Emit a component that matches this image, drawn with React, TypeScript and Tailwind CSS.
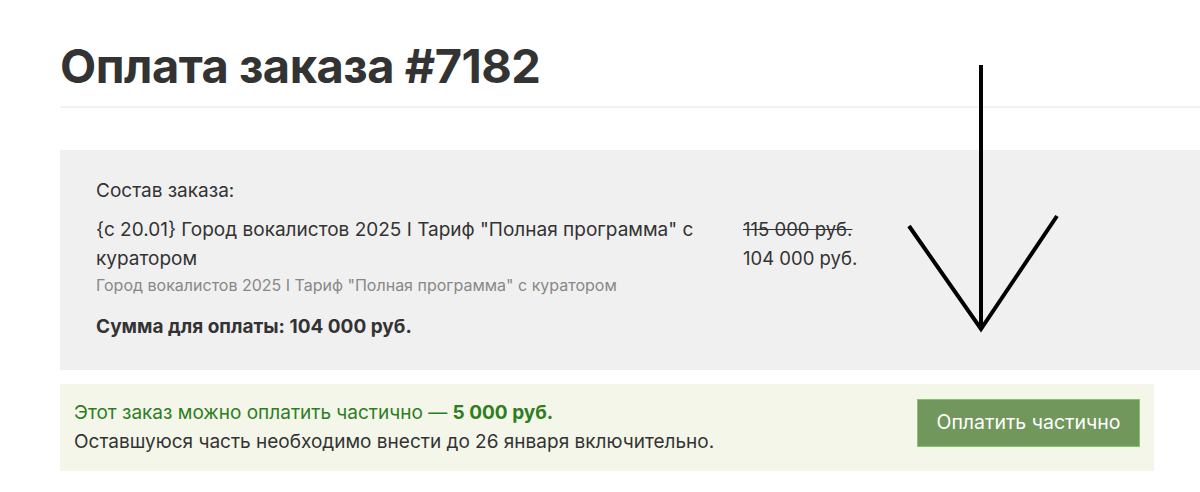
export default function App() {
  return (
    <div
      className="relative min-h-[492px] w-[1200px] overflow-hidden bg-white text-[#333]"
      style={{ fontFamily: 'Inter, "Noto Sans", sans-serif' }}
    >
      <div className="pl-[60px] pt-[38px]">
        <h1 className="text-[47px] font-bold leading-[56px] tracking-[-0.5px] text-[#333]">
          Оплата заказа #7182
        </h1>
        <div className="mt-[12px] h-[2px] bg-[#f2f2f2]" />

        <section className="mt-[42px] h-[220px] bg-[#f0f0f0] pl-[36px] pt-[28px]">
          <p className="text-[19px] leading-[26px] text-[#333]">Состав заказа:</p>
          <div className="mt-[11px] flex">
            <div className="w-[647px]">
              <p className="w-[630px] text-[19px] leading-[29px] text-[#333]">
                {'{с 20.01} Город вокалистов 2025 I Тариф "Полная программа" с куратором'}
              </p>
              <p className="mt-[1px] text-[16px] leading-[22px] text-[#888]">
                Город вокалистов 2025 I Тариф "Полная программа" с куратором
              </p>
            </div>
            <div className="text-[18.5px] leading-[29px] text-[#333]">
              <p className="line-through">115 000 руб.</p>
              <p>104 000 руб.</p>
            </div>
          </div>
          <p className="mt-[18px] text-[19px] font-bold leading-[26px] text-[#333]">
            Сумма для оплаты: 104 000 руб.
          </p>
        </section>

        <section className="mt-[14px] flex h-[87px] w-[1094px] justify-between bg-[#f3f6e9] pl-[14px] pr-[14px]">
          <div className="pt-[14px] text-[19px] leading-[29px]">
            <p className="text-[#2e7d1f]">
              Этот заказ можно оплатить частично — <span className="font-bold">5 000 руб.</span>
            </p>
            <p className="text-[#333]">Оставшуюся часть необходимо внести до 26 января включительно.</p>
          </div>
          <button
            type="button"
            className="mt-[15px] h-[48px] w-[223px] border border-[#86c46f] bg-[#72975d] text-[19.5px] text-white"
          >
            Оплатить частично
          </button>
        </section>
      </div>

      <svg
        className="pointer-events-none absolute left-0 top-0"
        width="1200"
        height="492"
        viewBox="0 0 1200 492"
        fill="none"
      >
        <path d="M981 65 L981 329" stroke="#000" strokeWidth="4" />
        <path d="M909 226 L981 329 L1057 216" stroke="#000" strokeWidth="4" strokeLinejoin="miter" />
      </svg>
    </div>
  );
}
